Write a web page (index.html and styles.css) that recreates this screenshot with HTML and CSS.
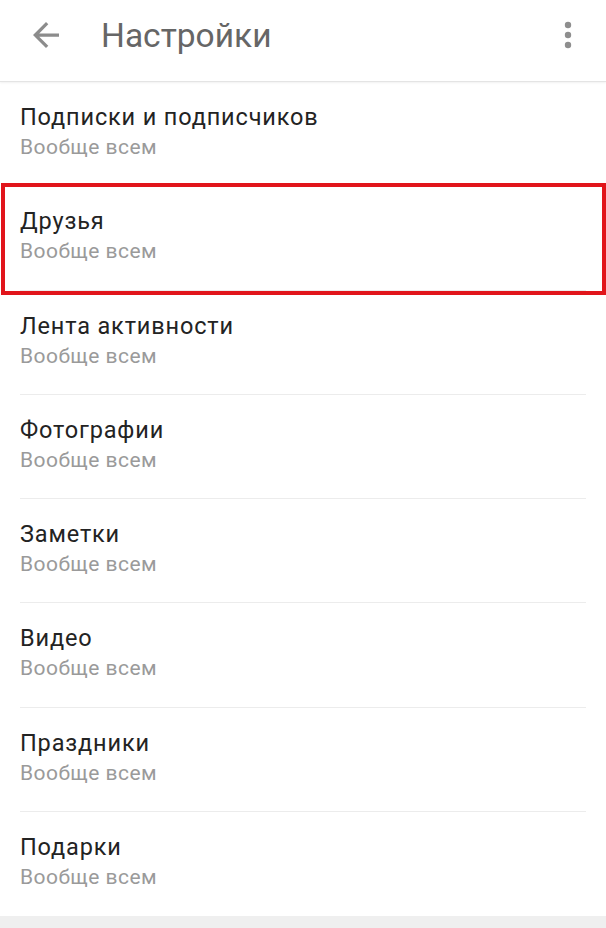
FILE: index.html
```html
<!DOCTYPE html>
<html lang="ru">
<head>
<meta charset="utf-8">
<title>Настройки</title>
<link rel="stylesheet" href="styles.css">
</head>
<body>
<div class="app">
  <header class="topbar">
    <div class="back">
      <svg width="26" height="26" viewBox="4 4 16 16" aria-hidden="true"><path d="M20 11H7.83l5.59-5.59L12 4l-8 8 8 8 1.41-1.41L7.83 13H20v-2z" fill="#8c8c8c"/></svg>
    </div>
    <h1 class="title">Настройки</h1>
    <div class="menu">
      <svg width="8" height="28" viewBox="0 0 8 28" aria-hidden="true"><circle cx="4" cy="4" r="3.2" fill="#8e8e8e"/><circle cx="4" cy="14" r="3.2" fill="#8e8e8e"/><circle cx="4" cy="24" r="3.2" fill="#8e8e8e"/></svg>
    </div>
  </header>
  <main class="list">
    <div class="item"><div class="row"><div class="name">Подписки и подписчиков</div><div class="value">Вообще всем</div></div></div>
    <div class="item highlight"><div class="row"><div class="name">Друзья</div><div class="value">Вообще всем</div></div></div>
    <div class="item"><div class="row"><div class="name">Лента активности</div><div class="value">Вообще всем</div></div></div>
    <div class="item"><div class="row"><div class="name">Фотографии</div><div class="value">Вообще всем</div></div></div>
    <div class="item"><div class="row"><div class="name">Заметки</div><div class="value">Вообще всем</div></div></div>
    <div class="item"><div class="row"><div class="name">Видео</div><div class="value">Вообще всем</div></div></div>
    <div class="item"><div class="row"><div class="name">Праздники</div><div class="value">Вообще всем</div></div></div>
    <div class="item last"><div class="row"><div class="name">Подарки</div><div class="value">Вообще всем</div></div></div>
  </main>
  <div class="bottom"></div>
</div>
</body>
</html>
```
FILE: styles.css
```css
html, body {
  margin: 0;
  padding: 0;
  background: #ffffff;
}
body {
  font-family: Roboto, "Noto Sans", "Liberation Sans", sans-serif;
  width: 606px;
  height: 928px;
  overflow: hidden;
}
.app {
  display: flex;
  flex-direction: column;
  height: 928px;
}
.topbar {
  height: 81px;
  flex: 0 0 81px;
  display: flex;
  align-items: center;
  border-bottom: 1px solid #e4e4e4;
  box-shadow: 0 1px 2px rgba(0, 0, 0, 0.06);
  position: relative;
  z-index: 1;
  background: #fff;
}
.back {
  width: 26px;
  height: 26px;
  margin-left: 33px;
  margin-top: -12px;
  display: flex;
}
.title {
  margin: -10px 0 0 42px;
  font-size: 33.5px;
  font-weight: 400;
  color: #666666;
  line-height: 40px;
  flex: 1;
}
.menu {
  width: 8px;
  height: 28px;
  margin-right: 34px;
  margin-top: -12px;
  display: flex;
}
.list {
  display: flex;
  flex-direction: column;
}
.item {
  height: 104.25px;
  flex: 0 0 104.25px;
  box-sizing: border-box;
}
.row {
  margin: 0 20px;
  height: 100%;
  box-sizing: border-box;
  padding-top: 20px;
  border-bottom: 1px solid #ececec;
}
.item.last .row {
  border-bottom: none;
}
.name {
  font-size: 23.5px;
  line-height: 30px;
  letter-spacing: 0.85px;
  color: #232323;
}
.value {
  margin-top: 2px;
  font-size: 21px;
  line-height: 26px;
  letter-spacing: 0.45px;
  color: #9a9a9a;
}
.highlight {
  position: relative;
}
.highlight::before {
  content: "";
  position: absolute;
  top: -3px;
  bottom: -4px;
  left: 1px;
  right: 0;
  border: 4.5px solid #e1151b;
  z-index: 2;
}
.bottom {
  flex: 1;
  background: #efefef;
}
```
